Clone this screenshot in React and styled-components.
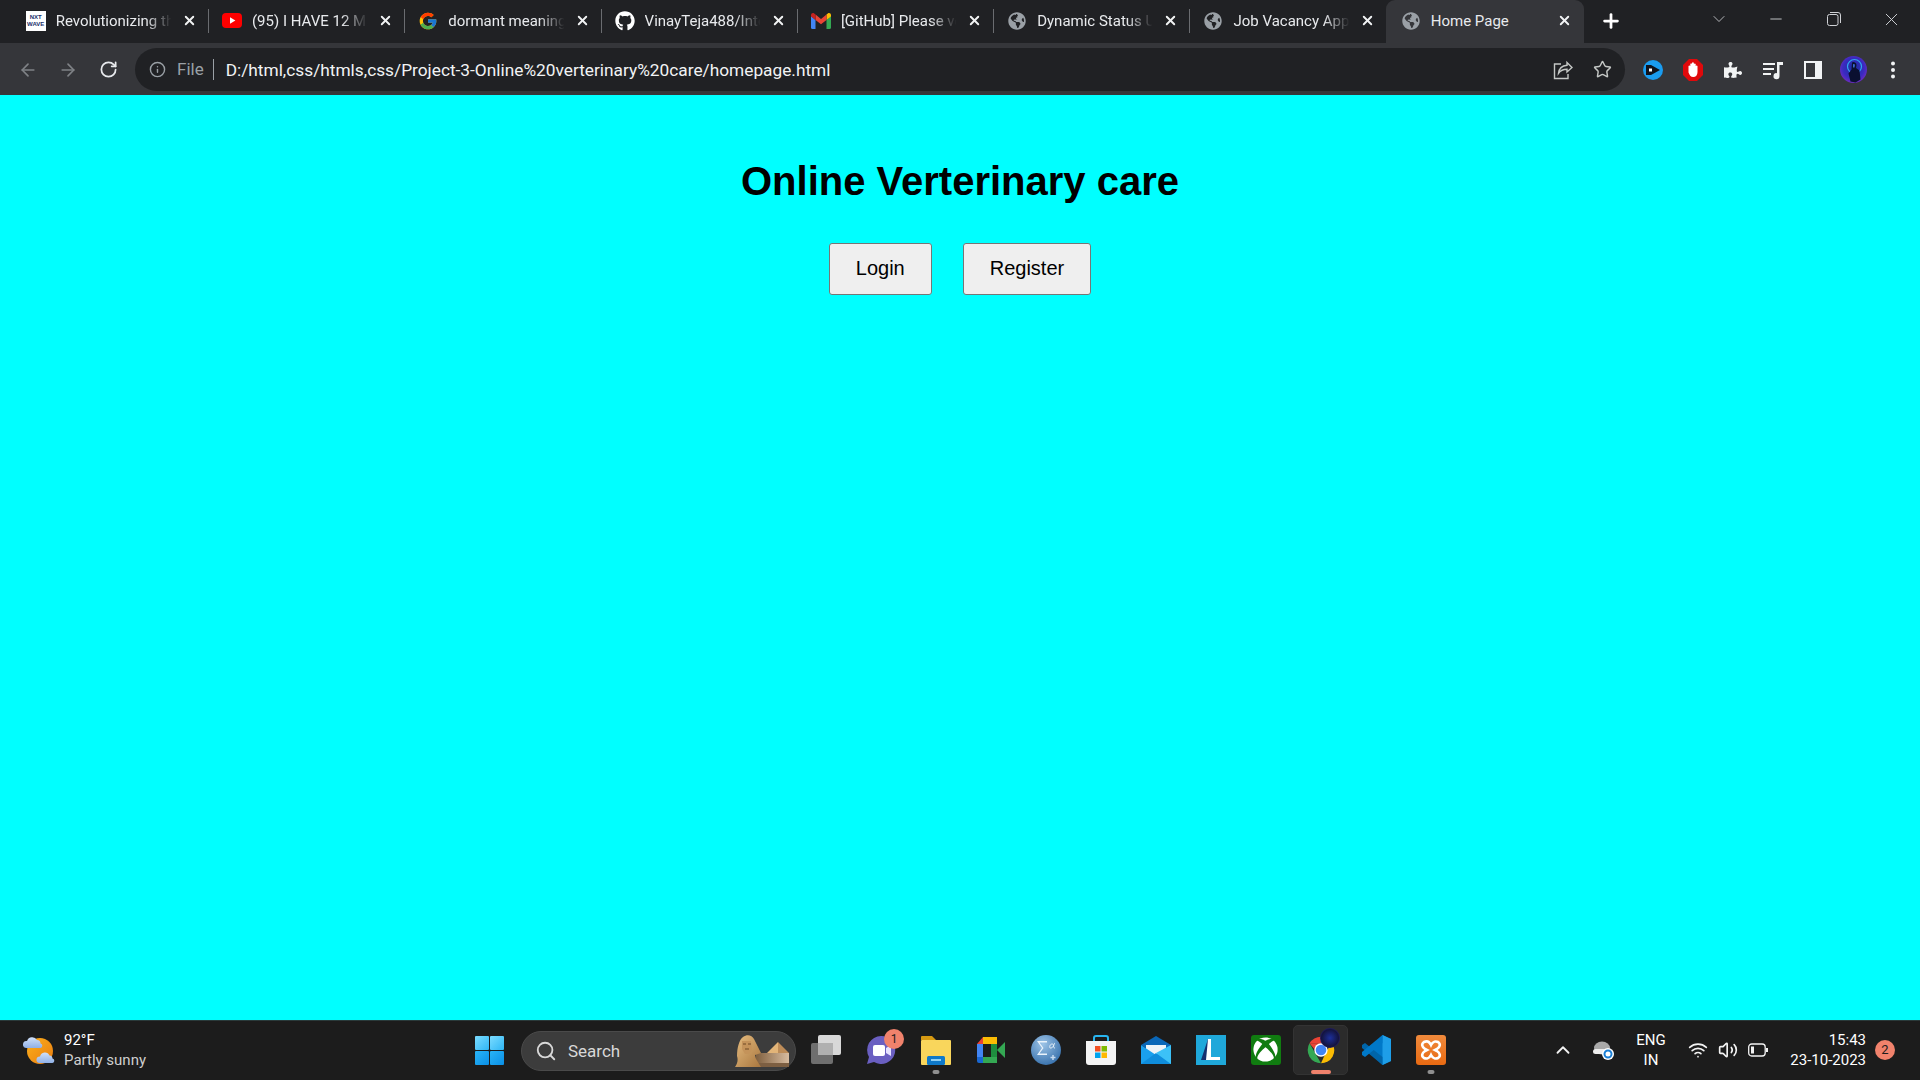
import React from "react";
import styled, { createGlobalStyle } from "styled-components";
import { FaGithub, FaGlobeAmericas, FaPuzzlePiece, FaXbox } from "react-icons/fa";
import { FcGoogle } from "react-icons/fc";
import { Search as SearchIcon, Star, Info, ArrowLeft, ArrowRight, RotateCw, X, Plus, Minus, ChevronDown, ChevronUp, Wifi, Volume2 } from "lucide-react";

const GlobalStyle = createGlobalStyle`
  html, body { margin: 0; padding: 0; height: 100%; overflow: hidden; }
  * { box-sizing: border-box; }
`;

const Screen = styled.div`
  width: 1920px;
  height: 1080px;
  display: flex;
  flex-direction: column;
  font-family: Roboto, "Liberation Sans", sans-serif;
`;

const TabStrip = styled.div`
  height: 43px;
  flex: none;
  display: flex;
  align-items: stretch;
  padding-left: 12.7px;
  background: #202124;
  color: #e8eaed;
`;

const Tab = styled.div`
  position: relative;
  width: ${(p) => (p.$active ? "198px" : "196.3px")};
  margin-left: ${(p) => (p.$active ? "-1px" : "0")};
  display: flex;
  align-items: center;
  padding: 0 12px 2px ${(p) => (p.$active ? "15px" : "13px")};
  background: ${(p) => (p.$active ? "#35363a" : "transparent")};
  border-radius: ${(p) => (p.$active ? "9px 9px 0 0" : "0")};
  &::after {
    content: "";
    display: ${(p) => (p.$last ? "none" : "block")};
    position: absolute;
    right: 0;
    top: 9px;
    bottom: 10px;
    width: 1px;
    background: #6a6c70;
  }
`;

const Favicon = styled.span`
  width: 20px;
  height: 20px;
  flex: none;
  display: flex;
  align-items: center;
  justify-content: center;
  color: ${(p) => p.$color || "#9aa0a6"};
`;

const NxtLogo = styled.span`
  width: 20px;
  height: 20px;
  background: #fff;
  color: #1b2f6b;
  font: 700 6px/7px "Liberation Sans", sans-serif;
  text-align: center;
  padding-top: 3px;
`;

const TabTitle = styled.span`
  flex: 1;
  min-width: 0;
  margin: 0 8px 0 10px;
  font-size: 15px;
  white-space: nowrap;
  overflow: hidden;
  mask-image: ${(p) => (p.$active ? "none" : "linear-gradient(90deg, #000 76%, transparent 98%)")};
`;

const TabClose = styled(X)`
  flex: none;
  width: 15px;
  height: 15px;
  stroke-width: 3;
  color: #f1f3f4;
`;

const NewTab = styled(Plus)`
  width: 22px;
  height: 22px;
  margin: 10px 0 0 16px;
  stroke-width: 3;
  color: #fff;
`;

const WindowControls = styled.div`
  margin-left: auto;
  display: flex;
  align-items: flex-start;
  color: #d0d2d6;
`;

const WindowButton = styled.span`
  width: 57.5px;
  height: 38px;
  display: flex;
  align-items: center;
  justify-content: center;
`;

const Toolbar = styled.div`
  height: 52px;
  flex: none;
  display: flex;
  align-items: center;
  padding: 5px 0 4px 8px;
  background: #35363a;
`;

const NavButton = styled.span`
  width: 40px;
  display: flex;
  justify-content: center;
  color: ${(p) => (p.$dim ? "#7f8286" : "#e8eaed")};
`;

const Omnibox = styled.div`
  width: 1490px;
  height: 43px;
  margin-left: 7px;
  display: flex;
  align-items: center;
  padding: 0 14px;
  border-radius: 22px;
  background: #202124;
`;

const Scheme = styled.span`
  margin-left: 11px;
  padding-right: 9px;
  border-right: 1px solid #9aa0a6;
  color: #9aa0a6;
  font-size: 17px;
  line-height: 21px;
`;

const Url = styled.span`
  margin-left: 12px;
  color: #f1f3f4;
  font-size: 17.3px;
  white-space: nowrap;
`;

const OmniActions = styled.div`
  margin-left: auto;
  display: flex;
  align-items: center;
  gap: 20px;
  margin-right: -1px;
  color: #c4c7c5;
`;

const Extensions = styled.div`
  display: flex;
  align-items: center;
  margin-left: 8px;
`;

const ExtSlot = styled.span`
  width: 40px;
  display: flex;
  justify-content: center;
  color: #f1f3f4;
`;

const Main = styled.main`
  flex: 1;
  display: flex;
  flex-direction: column;
  align-items: center;
  padding-top: 63px;
  background: #00ffff;
  font-family: "Liberation Sans", Arial, sans-serif;
`;

const Title = styled.h1`
  margin: 0 0 39px;
  font-size: 40px;
  line-height: 46px;
  font-weight: 700;
  color: #000;
`;

const Actions = styled.div`
  display: flex;
  gap: 31px;
`;

const ActionButton = styled.button`
  height: 52px;
  padding: 0 26px 2px;
  font: 400 20px "Liberation Sans", Arial, sans-serif;
  color: #000;
  background: #efefef;
  border: 1px solid #767676;
  border-radius: 3px;
`;

const Taskbar = styled.footer`
  height: 60px;
  flex: none;
  display: flex;
  align-items: center;
  background: #1c1c1c;
  border-top: 1px solid #2a3a3a;
  color: #fff;
`;

const Weather = styled.div`
  width: 475px;
  display: flex;
  align-items: center;
  margin-bottom: 2px;
  padding-left: 23px;
  gap: 8px;
`;

const TwoLines = styled.div`
  font-size: 15px;
  line-height: 20px;
  color: ${(p) => p.$color || "#fff"};
  text-align: ${(p) => p.$align || "left"};
  white-space: nowrap;
`;

const Muted = styled.div`
  color: #cfcfcf;
`;

const StartSlot = styled.span`
  width: 46px;
  display: flex;
`;

const SearchPill = styled.div`
  width: 275px;
  height: 40px;
  display: flex;
  align-items: center;
  padding: 0 0 0 13px;
  gap: 11px;
  border-radius: 20px;
  background: #3c3c3c;
  border: 1px solid #4a4a4a;
  font-size: 17px;
  color: #d8d8d8;
`;

const SearchArt = styled.svg`
  margin-left: auto;
  margin-right: 5px;
  flex: none;
`;

const Apps = styled.div`
  display: flex;
  align-items: center;
  margin: 0 0 2px 2px;
`;

const AppSlot = styled.span`
  position: relative;
  width: 55px;
  height: 50px;
  display: flex;
  align-items: center;
  justify-content: center;
  border-radius: 5px;
  border: 1px solid ${(p) => (p.$active ? "#333" : "transparent")};
  background: ${(p) => (p.$active ? "#2b2b2b" : "transparent")};
  &::after {
    content: "";
    display: ${(p) => (p.$mark ? "block" : "none")};
    position: absolute;
    bottom: 0;
    left: 50%;
    transform: translateX(-50%);
    height: 4px;
    width: ${(p) => (p.$mark === "active" ? "20px" : "7px")};
    border-radius: 2px;
    background: ${(p) => (p.$mark === "active" ? "#f0826c" : "#8f8f8f")};
  }
`;

const CountBadge = styled.span`
  position: absolute;
  top: 3px;
  left: 30px;
  width: 20px;
  height: 20px;
  display: flex;
  align-items: center;
  justify-content: center;
  border-radius: 50%;
  background: #f0826c;
  color: #1c1c1c;
  font-size: 12px;
`;

const Tray = styled.div`
  margin: 0 0 2px auto;
  display: flex;
  align-items: center;
  padding-right: 25px;
  color: #f2f2f2;
`;

const TraySlot = styled.span`
  width: ${(p) => p.$w}px;
  margin-left: ${(p) => p.$ml || 0}px;
  display: flex;
  justify-content: ${(p) => p.$justify || "center"};
`;

const NotifyBadge = styled.span`
  width: 20px;
  height: 20px;
  margin-left: 9px;
  display: flex;
  align-items: center;
  justify-content: center;
  border-radius: 50%;
  background: #f0826c;
  color: #1c1c1c;
  font-size: 13px;
`;

const YouTube = () => (
  <svg width="20" height="15" viewBox="0 0 20 15">
    <rect width="20" height="15" rx="4" fill="#f00" />
    <path d="M8 4.2v6.6l5.4-3.3z" fill="#fff" />
  </svg>
);

const Gmail = () => (
  <svg width="20" height="16" viewBox="0 0 20 16">
    <path d="M0 3v11.5A1.5 1.5 0 0 0 1.5 16H4.500V7z" fill="#4285f4" />
    <path d="M20 3v11.5a1.500 1.500 0 0 1-1.500 1.500H15.500V7z" fill="#34a853" />
    <path d="M15.500 1.500V7L20 3.500V2c0-1.800-2-2.500-3.200-1.500z" fill="#fbbc04" />
    <path d="M4.500 7V1.500L10 6l5.500-4.500V7L10 11.200z" fill="#ea4335" />
    <path d="M0 2v1.500L4.500 7V1.500L3.200.5C2 -.5 0 .2 0 2z" fill="#c5221f" />
  </svg>
);

const ShareIcon = () => (
  <svg width="20" height="20" viewBox="0 0 20 20" fill="none" stroke="currentColor" strokeWidth="1.400">
    <path d="M14 2.500 19 7.500 14 12V9.300c-4 0-6.500 1.200-8.500 4 .5-4.500 3.500-7.500 8.500-8z" />
    <path d="M8 4H1.500v14.500H15V14" />
  </svg>
);

const ExtPlay = () => (
  <svg width="20" height="20" viewBox="0 0 20 20">
    <circle cx="10" cy="10" r="10" fill="#1a9cf0" />
    <path d="M3 5h5l9 5-9 5H3z" fill="#10131c" />
    <rect x="6" y="8.500" width="3" height="3" fill="#fff" />
  </svg>
);

const ExtStop = () => (
  <svg width="20" height="22" viewBox="0 0 20 22">
    <path d="M6 0h8l6 6v10l-6 6H6l-6-6V6z" fill="#e0090b" />
    <path d="M5.500 11V7a1 1 0 0 1 1.800 0V5a1 1 0 0 1 1.700 0V4a1 1 0 0 1 1.900 0v1a1 1 0 0 1 1.800 0v2a1 1 0 0 1 1.800 0v6c0 3-1.600 5-4.300 5-2.500 0-3.300-1.500-4.700-4.500z" fill="#fff" />
  </svg>
);

const MediaIcon = () => (
  <svg width="20" height="20" viewBox="0 0 20 20" fill="currentColor">
    <rect x="0" y="3" width="12" height="2" />
    <rect x="0" y="8" width="11" height="2" />
    <rect x="0" y="13" width="8" height="2" />
    <path d="M14 2h6v3h-3.500v11a3 3 0 1 1-2.500-2.800z" />
  </svg>
);

const SidePanel = () => (
  <svg width="18" height="18" viewBox="0 0 18 18">
    <rect width="18" height="18" fill="#f1f3f4" />
    <rect x="2" y="2" width="9" height="14" fill="#35363a" />
  </svg>
);

const Avatar = () => (
  <svg width="27" height="27" viewBox="0 0 27 27">
    <defs>
      <radialGradient id="avatar-bg" cx="0.500" cy="0.450" r="0.600">
        <stop offset="0" stopColor="#1c2f9c" />
        <stop offset="0.650" stopColor="#3a2ac0" />
        <stop offset="1" stopColor="#7a2bc0" />
      </radialGradient>
    </defs>
    <circle cx="13.500" cy="13.500" r="13.500" fill="url(#avatar-bg)" />
    <circle cx="14.500" cy="10.500" r="7" fill="none" stroke="#2fa8f0" strokeWidth="1.200" />
    <path d="M12 6.500a3 3 0 0 1 4.500 2.500l-.5 3 3.500 2.500 1 9-5 3-5-1-2-8 3-4z" fill="#0a1030" />
    <path d="M13 8l2 .5-.5 3h-1.500z" fill="#3a6ad0" />
  </svg>
);

const Dots = () => (
  <svg width="4" height="18" viewBox="0 0 4 18" fill="#f1f3f4">
    <circle cx="2" cy="2.500" r="2" />
    <circle cx="2" cy="9" r="2" />
    <circle cx="2" cy="15.500" r="2" />
  </svg>
);

const RestoreIcon = () => (
  <svg width="14" height="14" viewBox="0 0 14 14" fill="none" stroke="currentColor">
    <rect x="0.500" y="2.500" width="10.500" height="11" rx="2" />
    <path d="M3 .5h8a2.500 2.500 0 0 1 2.500 2.500v8" />
  </svg>
);

const WeatherIcon = () => (
  <svg width="33" height="30" viewBox="0 0 33 30">
    <defs>
      <linearGradient id="sun" x1="0" y1="0" x2="1" y2="1">
        <stop offset="0" stopColor="#fbb01c" />
        <stop offset="1" stopColor="#ea7d10" />
      </linearGradient>
      <linearGradient id="cloud" x1="0" y1="0" x2="0" y2="1">
        <stop offset="0" stopColor="#cfe0fa" />
        <stop offset="1" stopColor="#90b0e6" />
      </linearGradient>
    </defs>
    <circle cx="17" cy="16" r="13" fill="url(#sun)" />
    <path d="M3 13a3.500 3.500 0 0 1 1-7 5.500 5.500 0 0 1 10-1 3.500 3.500 0 0 1 3.500 3.500 2.300 2.300 0 0 1 0 4.500z" fill="url(#cloud)" />
    <path d="M16 28a3.300 3.300 0 0 1 1-6.500 5 5 0 0 1 9.500-1 3.300 3.300 0 0 1 3 3 2.300 2.300 0 0 1 0 4.500z" fill="url(#cloud)" />
  </svg>
);

const WindowsLogo = () => (
  <svg width="29" height="29" viewBox="0 0 29 29">
    <defs>
      <linearGradient id="win-top" x1="0" y1="0" x2="1" y2="1">
        <stop offset="0" stopColor="#7bdcff" />
        <stop offset="1" stopColor="#2fb6f5" />
      </linearGradient>
      <linearGradient id="win-bottom" x1="0" y1="0" x2="1" y2="1">
        <stop offset="0" stopColor="#29b4f6" />
        <stop offset="1" stopColor="#0a8fe6" />
      </linearGradient>
    </defs>
    <rect width="14" height="14" rx="1" fill="url(#win-top)" />
    <rect x="15" width="14" height="14" rx="1" fill="url(#win-top)" />
    <rect y="15" width="14" height="14" rx="1" fill="url(#win-bottom)" />
    <rect x="15" y="15" width="14" height="14" rx="1" fill="url(#win-bottom)" />
  </svg>
);

const SphinxArt = () => (
  <SearchArt width="58" height="34" viewBox="0 0 58 34">
    <defs>
      <linearGradient id="stone" x1="0" y1="0" x2="1" y2="1">
        <stop offset="0" stopColor="#e6bd80" />
        <stop offset="1" stopColor="#a9773f" />
      </linearGradient>
      <linearGradient id="sand" x1="0" y1="0" x2="1" y2="0">
        <stop offset="0" stopColor="#80603f" />
        <stop offset="1" stopColor="#d8bca0" />
      </linearGradient>
      <linearGradient id="pyramid" x1="0" y1="0" x2="1" y2="0">
        <stop offset="0.500" stopColor="#e2b478" />
        <stop offset="0.500" stopColor="#bd8c58" />
      </linearGradient>
    </defs>
    <path d="M35 19 46 8 57 19z" fill="url(#pyramid)" />
    <path d="M24 19h33v14H24z" fill="url(#sand)" />
    <path d="M24 29h33v4H24z" fill="#7d5f42" />
    <path d="M5 22C5 14 7 6 11 3c4-3 9-2 11 2l7 14-6 2 1 4 5 8H3c3-4 3-8 2-11z" fill="url(#stone)" />
    <path d="M10 7h9l1 9-3 4h-4l-3-5z" fill="#c4935a" />
    <path d="M11 10h3M16 10h3M13 15h4" stroke="#6e4a25" strokeWidth="1" />
  </SearchArt>
);

const TaskView = () => (
  <svg width="30" height="29" viewBox="0 0 30 29">
    <rect y="8" width="22" height="21" rx="2" fill="#6f6f6f" />
    <rect x="7" width="23" height="20" rx="2" fill="#ededed" opacity="0.900" />
    <rect x="7" y="8" width="15" height="12" fill="#b0b0b0" />
  </svg>
);

const ChatApp = () => (
  <svg width="30" height="30" viewBox="0 0 30 30">
    <path d="M15 1a14 14 0 1 1-7 26L1 29l2-7A14 14 0 0 1 15 1z" fill="#6a5fc1" />
    <rect x="7" y="10" width="12" height="11" rx="2" fill="#fff" />
    <path d="M20 13l5-3v11l-5-3z" fill="#e6e3ff" />
  </svg>
);

const FolderApp = () => (
  <svg width="30" height="30" viewBox="0 0 30 30">
    <path d="M0 2a1 1 0 0 1 1-1h10l4 4H0z" fill="#d69a12" />
    <rect y="5" width="30" height="25" rx="1" fill="#f9d65c" />
    <rect x="6" y="21" width="18" height="9" rx="1.500" fill="#0f79c9" />
    <rect x="10" y="24" width="10" height="2" fill="#8fd0f5" />
  </svg>
);

const MeetApp = () => (
  <svg width="28" height="26" viewBox="0 0 28 26">
    <path d="M6 0h14v7H6z" fill="#fbbc04" />
    <path d="M0 7l6-7v7z" fill="#ea4335" />
    <rect y="7" width="6" height="13" fill="#4285f4" />
    <path d="M0 20h6v6H2a2 2 0 0 1-2-2z" fill="#1967d2" />
    <path d="M6 20h14v6H6z" fill="#34a853" />
    <path d="M14 7h6v13h-6z" fill="#1e8e3e" />
    <path d="M20 13l8-8v16z" fill="#34a853" />
  </svg>
);

const SigmaApp = () => (
  <svg width="30" height="30" viewBox="0 0 30 30">
    <defs>
      <radialGradient id="sigma-bg" cx="0.400" cy="0.300" r="0.800">
        <stop offset="0" stopColor="#9cc3e6" />
        <stop offset="1" stopColor="#2f6aa8" />
      </radialGradient>
    </defs>
    <circle cx="15" cy="15" r="15" fill="url(#sigma-bg)" />
    <path d="M6 6h10v1.500H8.500L12.500 13l-4 5.500H16V20H6l5-7z" fill="#eaf3fb" />
    <path d="M19 10.500c1-2 3.500-2 3.500 0 0 2 .5 2.500 1.500 2.500M24 8c-1 0-1 5-4.500 5-1 0-1-1-.5-2.500" fill="none" stroke="#eaf3fb" strokeWidth="1" />
    <path d="M19.500 22.500h5M22 20v5" stroke="#c5d9ee" strokeWidth="1.500" />
  </svg>
);

const StoreApp = () => (
  <svg width="30" height="30" viewBox="0 0 30 30">
    <path d="M8 7V3a2 2 0 0 1 2-2h10a2 2 0 0 1 2 2v4" fill="none" stroke="#28b5f0" strokeWidth="2" />
    <path d="M0 6h30v21a3 3 0 0 1-3 3H3a3 3 0 0 1-3-3z" fill="#f4f4f4" />
    <rect x="9" y="11" width="5.500" height="5.500" fill="#f25022" />
    <rect x="15.500" y="11" width="5.500" height="5.500" fill="#7fba00" />
    <rect x="9" y="17.500" width="5.500" height="5.500" fill="#00a4ef" />
    <rect x="15.500" y="17.500" width="5.500" height="5.500" fill="#ffb900" />
  </svg>
);

const MailApp = () => (
  <svg width="30" height="28" viewBox="0 0 30 28">
    <path d="M0 9 15 0l15 9-15 10z" fill="#0a67b8" />
    <path d="M5 9h20v5l-10 6-10-6z" fill="#eef3f7" />
    <path d="M0 9l15 10 15-10v19H0z" fill="#1aa0ee" />
    <path d="M0 28 15 17l15 11z" fill="#0f8ddc" />
    <path d="M30 9v19L15 17z" fill="#3cc1f7" />
  </svg>
);

const LApp = () => (
  <svg width="30" height="30" viewBox="0 0 30 30">
    <rect width="30" height="30" fill="#1fa8da" />
    <path d="M12 4 5 25h19v-3H13z" fill="#14306f" />
    <path d="M12 4h3v18h9v3H10z" fill="#fff" />
  </svg>
);

const XboxTile = styled.span`
  width: 30px;
  height: 30px;
  display: flex;
  align-items: center;
  justify-content: center;
  border-radius: 3px;
  background: #107c10;
  color: #fff;
`;

const ChromeApp = () => (
  <svg width="32" height="32" viewBox="0 0 48 48">
    <path d="M6.700 14A20 20 0 0 1 41.300 14H24z" fill="#ea4335" />
    <path d="M6.700 14 L24 44A20 20 0 0 1 6.700 14z" fill="#34a853" />
    <path d="M41.300 14A20 20 0 0 1 24 44L33 24z" fill="#fbbc04" />
    <path d="M6.700 14 15 24 24 14z" fill="#ea4335" />
    <circle cx="24" cy="24" r="10" fill="#fff" />
    <circle cx="24" cy="24" r="8" fill="#4285f4" />
  </svg>
);

const ChromeProfile = styled.span`
  position: absolute;
  top: 2px;
  left: 26px;
  width: 20px;
  height: 20px;
  border-radius: 50%;
  background: radial-gradient(circle at 50% 50%, #1c2f9c, #14143f 60%, #3a2ac0 95%);
`;

const VsCodeApp = () => (
  <svg width="30" height="30" viewBox="0 0 30 30">
    <path d="M21.500 0 30 4v22l-8.500 4L8 17l5-3.500z" fill="#0078c8" />
    <path d="M21.500 0 30 4v22l-8.500 4z" fill="#1e9ee8" />
    <path d="M1 10l3-2 17.500 14V30L1 13z" fill="#0065a9" />
    <path d="M1 20l3 2 17.500-14V0L1 17z" fill="#0078c8" />
  </svg>
);

const XamppApp = () => (
  <svg width="30" height="30" viewBox="0 0 30 30">
    <defs>
      <linearGradient id="xampp" x1="0" y1="0" x2="0" y2="1">
        <stop offset="0" stopColor="#f08a3c" />
        <stop offset="1" stopColor="#e86a12" />
      </linearGradient>
    </defs>
    <rect width="30" height="30" rx="3" fill="url(#xampp)" />
    <path d="M15 10C13 6 10 6 8 7 5 9 6 12 9 14L11 15 9 16C6 18 5 21 8 23 10 24 13 24 15 20 17 24 20 24 22 23 25 21 24 18 21 16L19 15 21 14C24 12 25 9 22 7 20 6 17 6 15 10z" fill="none" stroke="#fff" strokeWidth="2.600" />
  </svg>
);

const CloudSync = () => (
  <svg width="21" height="20" viewBox="0 0 21 20">
    <ellipse cx="9" cy="8" rx="8" ry="6.500" fill="#a9a9a9" />
    <rect x="0" y="9" width="13" height="5" rx="2.500" fill="#ededed" />
    <circle cx="15" cy="14" r="6" fill="#fff" />
    <circle cx="15" cy="14" r="3.500" fill="none" stroke="#1a7fd6" strokeWidth="2" />
  </svg>
);

const BatteryIcon = () => (
  <svg width="20" height="14" viewBox="0 0 20 14" fill="none" stroke="#f2f2f2" strokeWidth="1.300">
    <rect x="0.700" y="1" width="16.500" height="12" rx="3" />
    <rect x="3" y="3.500" width="3" height="7" fill="#f2f2f2" stroke="none" />
    <rect x="18" y="5" width="2" height="4" fill="#f2f2f2" stroke="none" />
  </svg>
);

const tabs = [
  { title: "Revolutionizing the Way", icon: <NxtLogo>NXT<br />WAVE</NxtLogo> },
  { title: "(95) I HAVE 12 Months", icon: <YouTube /> },
  { title: "dormant meaning", icon: <FcGoogle size={20} /> },
  { title: "VinayTeja488/Internship", icon: <FaGithub size={20} color="#fff" /> },
  { title: "[GitHub] Please verify", icon: <Gmail /> },
  { title: "Dynamic Status Update", icon: <FaGlobeAmericas size={18} /> },
  { title: "Job Vacancy Application", icon: <FaGlobeAmericas size={18} /> },
  { title: "Home Page", icon: <FaGlobeAmericas size={18} />, active: true },
];

const App = () => {
  return (
    <Screen>
      <GlobalStyle />
      <TabStrip>
        {tabs.map((tab, i) => (
          <Tab key={tab.title} $active={tab.active} $last={tab.active || i === tabs.length - 2}>
            <Favicon>{tab.icon}</Favicon>
            <TabTitle $active={tab.active}>{tab.title}</TabTitle>
            <TabClose />
          </Tab>
        ))}
        <NewTab />
        <WindowControls>
          <WindowButton><ChevronDown size={20} strokeWidth={1} /></WindowButton>
          <WindowButton><Minus size={18} strokeWidth={1.200} /></WindowButton>
          <WindowButton><RestoreIcon /></WindowButton>
          <WindowButton><X size={21} strokeWidth={1.100} /></WindowButton>
        </WindowControls>
      </TabStrip>

      <Toolbar>
        <NavButton $dim><ArrowLeft size={20} strokeWidth={2} /></NavButton>
        <NavButton $dim><ArrowRight size={20} strokeWidth={2} /></NavButton>
        <NavButton><RotateCw size={19} strokeWidth={2.200} /></NavButton>
        <Omnibox>
          <Info size={17} color="#9aa0a6" />
          <Scheme>File</Scheme>
          <Url>D:/html,css/htmls,css/Project-3-Online%20verterinary%20care/homepage.html</Url>
          <OmniActions>
            <ShareIcon />
            <Star size={19} strokeWidth={1.800} />
          </OmniActions>
        </Omnibox>
        <Extensions>
          <ExtSlot><ExtPlay /></ExtSlot>
          <ExtSlot><ExtStop /></ExtSlot>
          <ExtSlot><FaPuzzlePiece size={18} /></ExtSlot>
          <ExtSlot><MediaIcon /></ExtSlot>
          <ExtSlot><SidePanel /></ExtSlot>
          <ExtSlot><Avatar /></ExtSlot>
          <ExtSlot><Dots /></ExtSlot>
        </Extensions>
      </Toolbar>

      <Main>
        <Title>Online Verterinary care</Title>
        <Actions>
          <ActionButton>Login</ActionButton>
          <ActionButton>Register</ActionButton>
        </Actions>
      </Main>

      <Taskbar>
        <Weather>
          <WeatherIcon />
          <TwoLines>
            92°F
            <Muted>Partly sunny</Muted>
          </TwoLines>
        </Weather>
        <StartSlot><WindowsLogo /></StartSlot>
        <SearchPill>
          <SearchIcon size={22} />
          Search
          <SphinxArt />
        </SearchPill>
        <Apps>
          <AppSlot><TaskView /></AppSlot>
          <AppSlot><ChatApp /><CountBadge>1</CountBadge></AppSlot>
          <AppSlot $mark="idle"><FolderApp /></AppSlot>
          <AppSlot><MeetApp /></AppSlot>
          <AppSlot><SigmaApp /></AppSlot>
          <AppSlot><StoreApp /></AppSlot>
          <AppSlot><MailApp /></AppSlot>
          <AppSlot><LApp /></AppSlot>
          <AppSlot><XboxTile><FaXbox size={25} /></XboxTile></AppSlot>
          <AppSlot $active $mark="active"><ChromeApp /><ChromeProfile /></AppSlot>
          <AppSlot><VsCodeApp /></AppSlot>
          <AppSlot $mark="idle"><XamppApp /></AppSlot>
        </Apps>
        <Tray>
          <TraySlot $w={40}><ChevronUp size={22} strokeWidth={2} /></TraySlot>
          <TraySlot $w={40}><CloudSync /></TraySlot>
          <TraySlot $w={56}><TwoLines $align="center">ENG<br />IN</TwoLines></TraySlot>
          <TraySlot $w={30} $ml={4}><Wifi size={20} /></TraySlot>
          <TraySlot $w={30}><Volume2 size={20} /></TraySlot>
          <TraySlot $w={30}><BatteryIcon /></TraySlot>
          <TraySlot $w={93} $justify="flex-end"><TwoLines $align="right">15:43<br />23-10-2023</TwoLines></TraySlot>
          <NotifyBadge>2</NotifyBadge>
        </Tray>
      </Taskbar>
    </Screen>
  );
};

export default App;
